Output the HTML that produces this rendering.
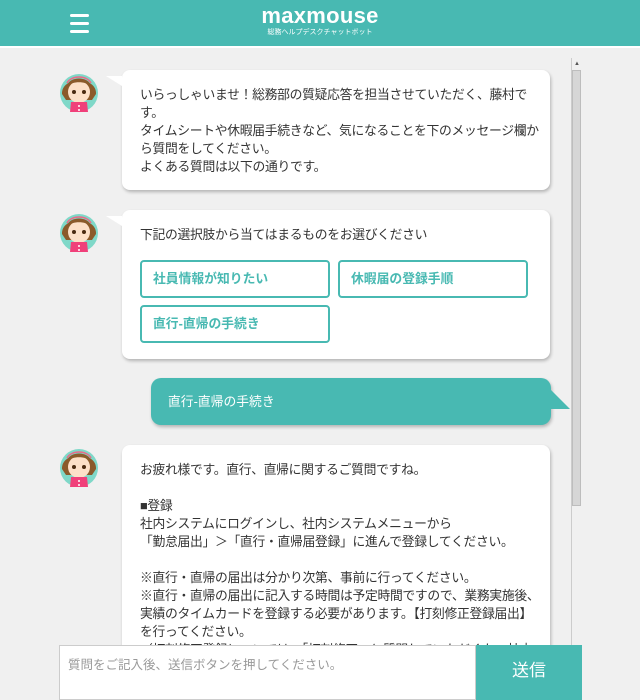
<!DOCTYPE html>
<html><head><meta charset="utf-8"><style>
*{margin:0;padding:0;box-sizing:border-box}
html,body{width:640px;height:700px;overflow:hidden}
body{background:#f0f0f0;font-family:"Liberation Sans","Noto Sans CJK JP",sans-serif;color:#333;font-size:12.8px;position:relative}
.hd{position:absolute;left:0;top:0;width:640px;height:46px;background:#48b9b2;border-bottom:2px solid #fff;box-sizing:content-box}
.hb{position:absolute;left:70px;top:14px;width:19px;height:20px}
.hb i{display:block;height:3px;background:#fff;border-radius:2px;margin-bottom:5px}
.logo{position:absolute;left:0;width:640px;top:3px;text-align:center;color:#fff;font-weight:bold;font-size:22px;letter-spacing:.3px}
.sub{position:absolute;left:0;width:640px;top:27px;text-align:center;color:#fff;font-size:7px}
.b{position:absolute;left:122px;width:428px;background:#fff;border-radius:8px;box-shadow:1px 2px 3px rgba(0,0,0,.25);padding:16px 4px 16px 18px;line-height:18px;white-space:nowrap;letter-spacing:-0.3px}
.b:before{content:"";position:absolute;left:-16px;top:6px;border-right:16px solid #fff;border-bottom:10px solid transparent}
.av{position:absolute;left:59px;width:40px;height:44px}
.btn{position:absolute;width:190px;height:38px;border:2px solid #48b9b2;border-radius:4px;color:#48b9b2;font-weight:bold;padding:9px 11px;line-height:16px}
.u{position:absolute;left:151px;top:378px;width:400px;height:47px;background:#48b9b2;border-radius:10px;box-shadow:1px 2px 3px rgba(0,0,0,.25);color:#fff;padding:15px 17px;line-height:17px}
.u:after{content:"";position:absolute;right:-19px;top:11px;border-left:20px solid #48b9b2;border-top:20px solid transparent}
.sb{position:absolute;left:571px;top:58px;width:11px;height:642px;background:#f0f0f0;border-left:1px solid #ccc}
.th{position:absolute;left:572px;top:70px;width:9px;height:436px;background:#d6d6d6;border:1px solid #bdbdbd}
.inp{position:absolute;left:59px;top:645px;width:417px;height:55px;background:#fff;border:1px solid #ccc;color:#999;padding:8px 8px;font-size:12.5px}
.send{position:absolute;left:476px;top:645px;width:106px;height:55px;background:#48b9b2;color:#fff;font-size:17px;text-align:center;line-height:52px}
</style></head><body>
<div class="hd"><div class="hb"><i></i><i></i><i></i></div>
<div class="logo">maxmouse</div><div class="sub">総務ヘルプデスクチャットボット</div></div>

<svg class="av" style="top:70px" viewBox="0 0 40 44"><circle cx="20" cy="23" r="19" fill="#7fd8c8"/><path d="M3 24 C2 6 38 6 37 24 L33 30 L7 30 Z" fill="#8b5a2b"/><ellipse cx="20" cy="22" rx="11" ry="11" fill="#fde0c8"/><path d="M8 16 C10 6 30 6 32 16 C26 11 14 11 8 16Z" fill="#8b5a2b"/><path d="M8 13 C12 5 28 5 32 13" stroke="#e86b8a" stroke-width="1.5" fill="none"/><circle cx="15" cy="22" r="2" fill="#4a2a10"/><circle cx="25" cy="22" r="2" fill="#4a2a10"/><path d="M11 42 L12 32 L28 32 L29 42 Z" fill="#f0407a"/><circle cx="20" cy="36" r="1" fill="#fff"/><circle cx="20" cy="40" r="1" fill="#fff"/></svg>
<div class="b" style="top:70px;height:120px">いらっしゃいませ！総務部の質疑応答を担当させていただく、藤村で<br>す。<br>タイムシートや休暇届手続きなど、気になることを下のメッセージ欄か<br>ら質問をしてください。<br>よくある質問は以下の通りです。</div>

<svg class="av" style="top:210px" viewBox="0 0 40 44"><circle cx="20" cy="23" r="19" fill="#7fd8c8"/><path d="M3 24 C2 6 38 6 37 24 L33 30 L7 30 Z" fill="#8b5a2b"/><ellipse cx="20" cy="22" rx="11" ry="11" fill="#fde0c8"/><path d="M8 16 C10 6 30 6 32 16 C26 11 14 11 8 16Z" fill="#8b5a2b"/><path d="M8 13 C12 5 28 5 32 13" stroke="#e86b8a" stroke-width="1.5" fill="none"/><circle cx="15" cy="22" r="2" fill="#4a2a10"/><circle cx="25" cy="22" r="2" fill="#4a2a10"/><path d="M11 42 L12 32 L28 32 L29 42 Z" fill="#f0407a"/><circle cx="20" cy="36" r="1" fill="#fff"/><circle cx="20" cy="40" r="1" fill="#fff"/></svg>
<div class="b" style="top:210px;height:149px">下記の選択肢から当てはまるものをお選びください</div>
<div class="btn" style="left:140px;top:260px">社員情報が知りたい</div>
<div class="btn" style="left:338px;top:260px">休暇届の登録手順</div>
<div class="btn" style="left:140px;top:305px">直行-直帰の手続き</div>

<div class="u">直行-直帰の手続き</div>

<svg class="av" style="top:445px" viewBox="0 0 40 44"><circle cx="20" cy="23" r="19" fill="#7fd8c8"/><path d="M3 24 C2 6 38 6 37 24 L33 30 L7 30 Z" fill="#8b5a2b"/><ellipse cx="20" cy="22" rx="11" ry="11" fill="#fde0c8"/><path d="M8 16 C10 6 30 6 32 16 C26 11 14 11 8 16Z" fill="#8b5a2b"/><path d="M8 13 C12 5 28 5 32 13" stroke="#e86b8a" stroke-width="1.5" fill="none"/><circle cx="15" cy="22" r="2" fill="#4a2a10"/><circle cx="25" cy="22" r="2" fill="#4a2a10"/><path d="M11 42 L12 32 L28 32 L29 42 Z" fill="#f0407a"/><circle cx="20" cy="36" r="1" fill="#fff"/><circle cx="20" cy="40" r="1" fill="#fff"/></svg>
<div class="b" style="top:445px;height:255px;overflow:hidden;border-radius:8px 8px 0 0">お疲れ様です。直行、直帰に関するご質問ですね。<br><br>■登録<br>社内システムにログインし、社内システムメニューから<br>「勤怠届出」＞「直行・直帰届登録」に進んで登録してください。<br><br>※直行・直帰の届出は分かり次第、事前に行ってください。<br>※直行・直帰の届出に記入する時間は予定時間ですので、業務実施後、<br>実績のタイムカードを登録する必要があります。【打刻修正登録届出】<br>を行ってください。<br>（打刻修正登録については、「打刻修正」と質問していただくか、社内</div>

<div class="sb"></div><div class="th"></div>
<div style="position:absolute;left:574px;top:61px;font-size:6px;color:#555">▲</div>
<div class="inp">質問をご記入後、送信ボタンを押してください。</div>
<div class="send">送信</div>
</body></html>
